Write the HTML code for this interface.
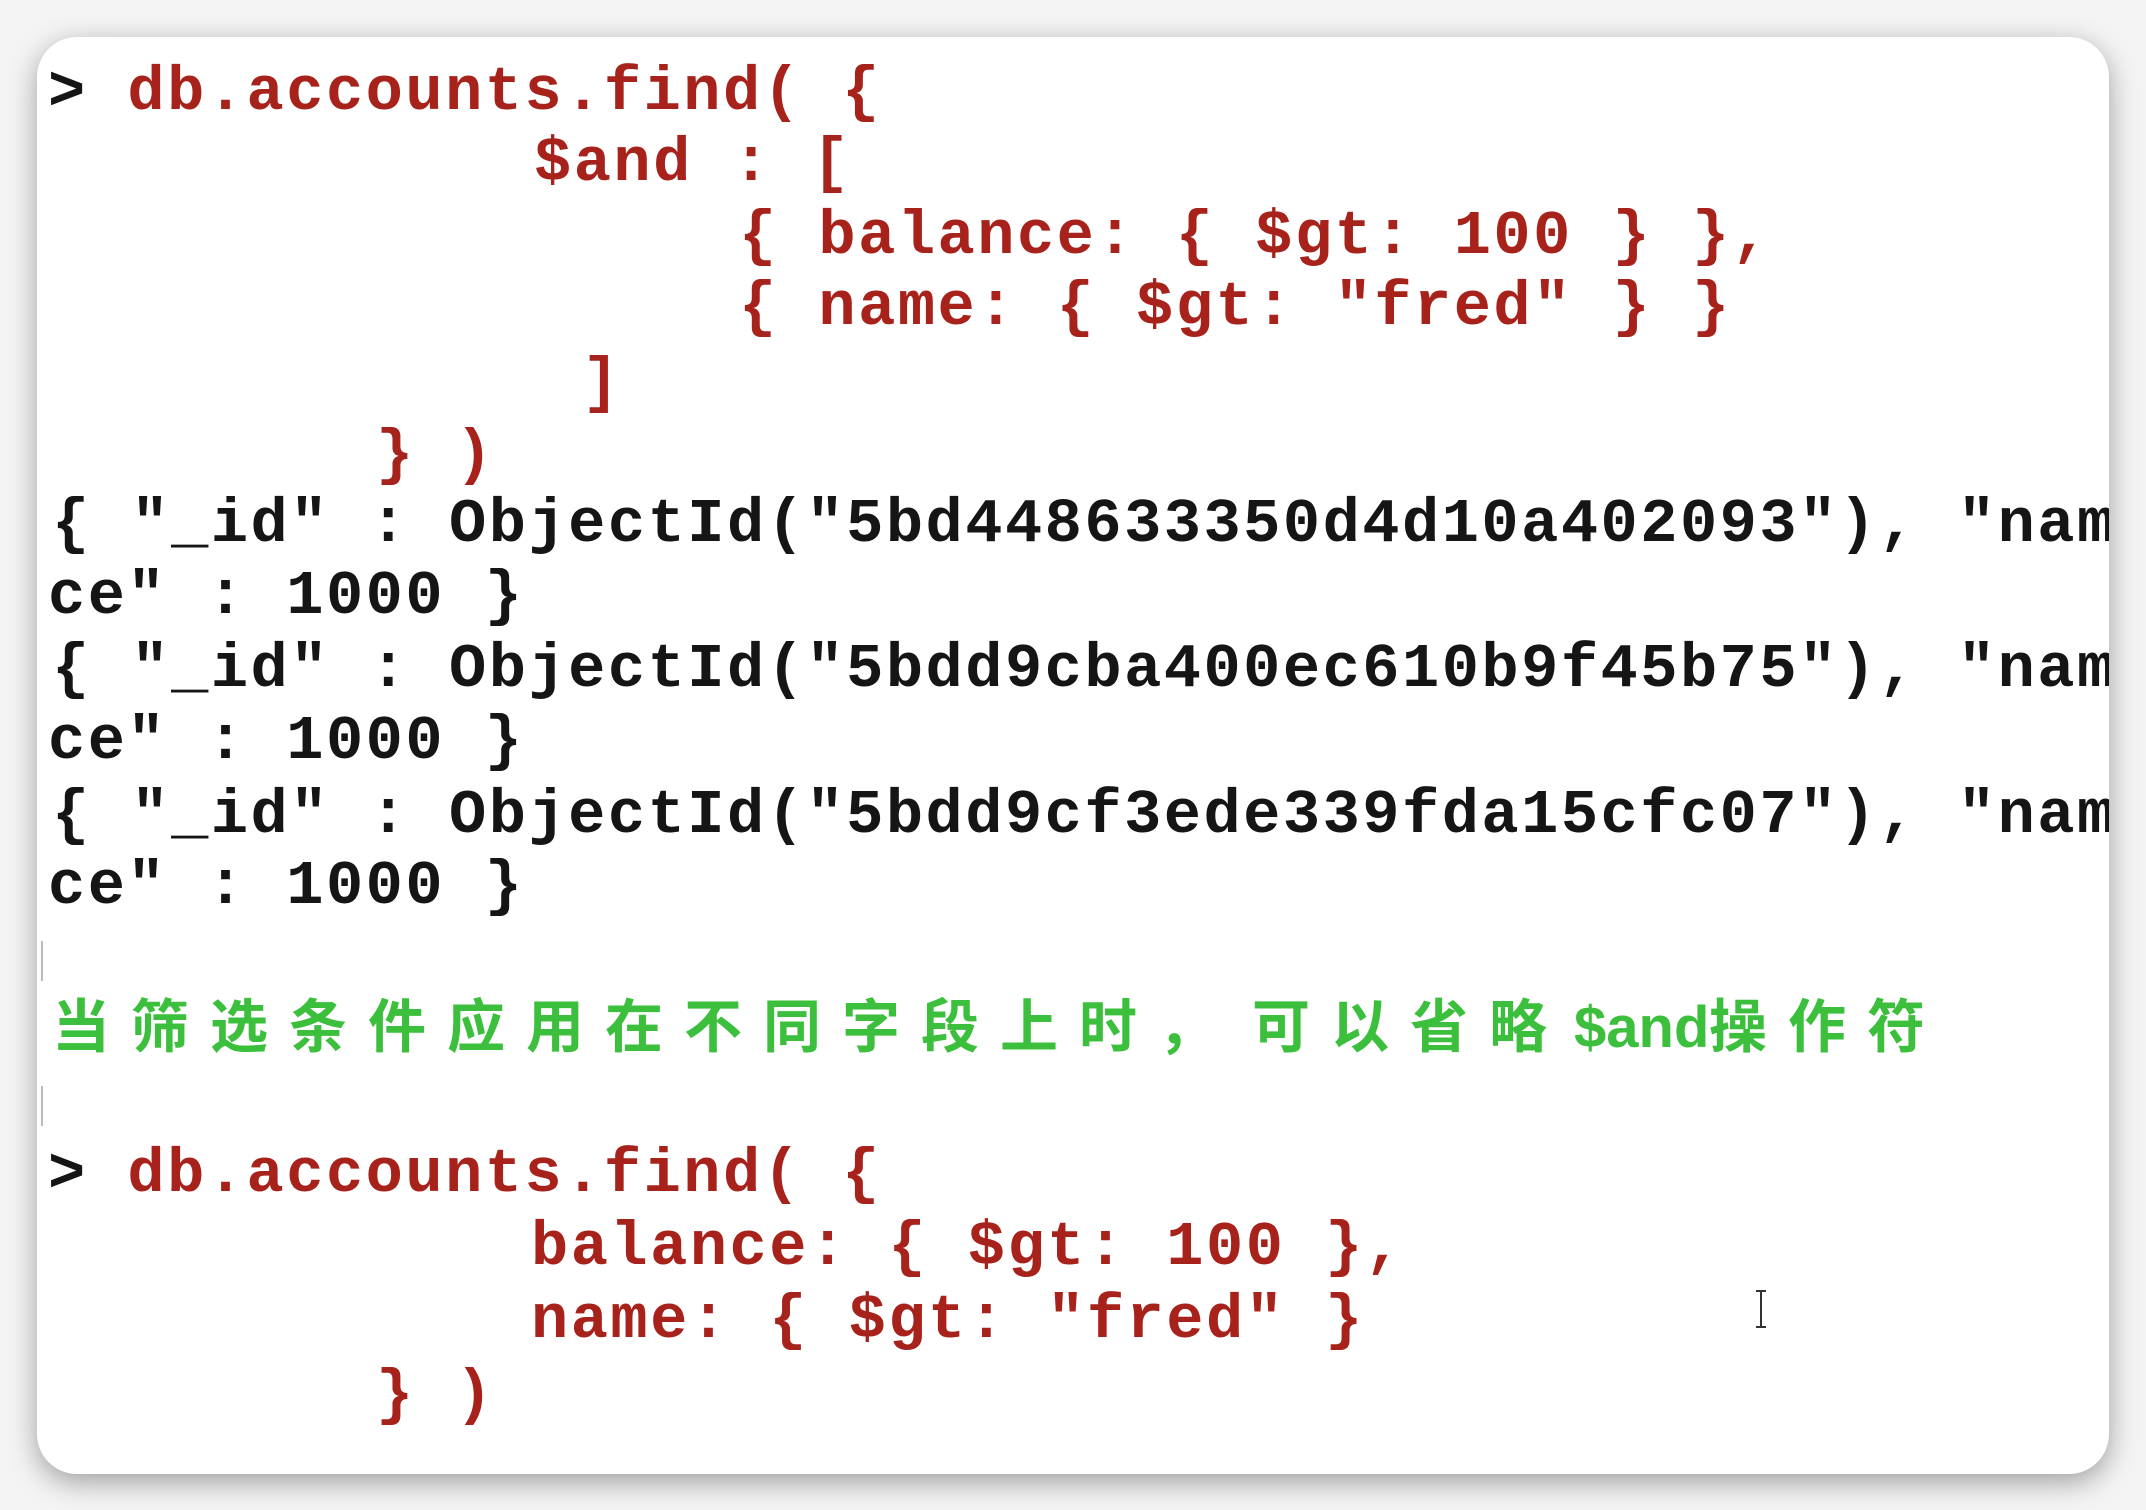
<!DOCTYPE html>
<html><head><meta charset="utf-8"><style>
html,body{margin:0;padding:0;width:2146px;height:1510px;background:#f4f4f4;overflow:hidden}
.card{position:absolute;left:37px;top:37px;width:2072px;height:1437px;background:#fff;border-radius:40px;box-shadow:0 8px 28px rgba(0,0,0,0.35);overflow:hidden}
.w{position:absolute;left:0;top:4px;width:2072px;height:1437px}
.l{position:absolute;white-space:pre;font-family:"Liberation Mono",monospace;font-weight:bold;font-size:62px;letter-spacing:2.5px;line-height:72px;height:72px}
.r{color:#a8221c}.k{color:#151515}
.g{position:absolute;white-space:pre;font-family:"Liberation Sans","Noto Sans CJK SC",sans-serif;font-weight:bold;font-size:58px;line-height:72px;color:#3cbf3c;letter-spacing:21px}
.bar{position:absolute;width:2px;background:#bbb}
</style></head><body>
<div class="card"><div class="w">
<div class="l" style="left:11px;top:16px"><span class="k">&gt; </span><span class="r">db.accounts.find( {</span></div>
<div class="l r" style="left:497px;top:87px">$and : [</div>
<div class="l r" style="left:702px;top:160px">{ balance: { $gt: 100 } },</div>
<div class="l r" style="left:702px;top:231px">{ name: { $gt: "fred" } }</div>
<div class="l r" style="left:545px;top:307px">]</div>
<div class="l r" style="left:339px;top:379px">} )</div>
<div class="l k" style="left:15px;top:448px">{ "_id" : ObjectId("5bd448633350d4d10a402093"), "name" : "fred"</div>
<div class="l k" style="left:11px;top:520px">ce" : 1000 }</div>
<div class="l k" style="left:15px;top:593px">{ "_id" : ObjectId("5bdd9cba400ec610b9f45b75"), "name" : "fred"</div>
<div class="l k" style="left:11px;top:665px">ce" : 1000 }</div>
<div class="l k" style="left:15px;top:739px">{ "_id" : ObjectId("5bdd9cf3ede339fda15cfc07"), "name" : "fred"</div>
<div class="l k" style="left:11px;top:810px">ce" : 1000 }</div>
<div class="bar" style="left:4px;top:900px;height:40px"></div>
<div class="g" style="left:15px;top:951px">当筛选条件应用在不同字段上时，</div>
<div class="g" style="left:1215px;top:951px">可以省略</div>
<div class="g" style="left:1537px;top:951px;letter-spacing:0">$and</div>
<div class="g" style="left:1672px;top:951px">操作符</div>
<div class="bar" style="left:4px;top:1045px;height:40px"></div>
<div class="l" style="left:11px;top:1098px"><span class="k">&gt; </span><span class="r">db.accounts.find( {</span></div>
<div class="l r" style="left:494px;top:1171px">balance: { $gt: 100 },</div>
<div class="l r" style="left:494px;top:1244px">name: { $gt: "fred" }</div>
<div class="l r" style="left:339px;top:1319px">} )</div>
<svg style="position:absolute;left:1716px;top:1248px" width="16" height="40" viewBox="0 0 16 40"><path d="M3 2h10M8 2v36M3 38h10" stroke="#333" stroke-width="2" fill="none"/></svg>
</div></div>
</body></html>
